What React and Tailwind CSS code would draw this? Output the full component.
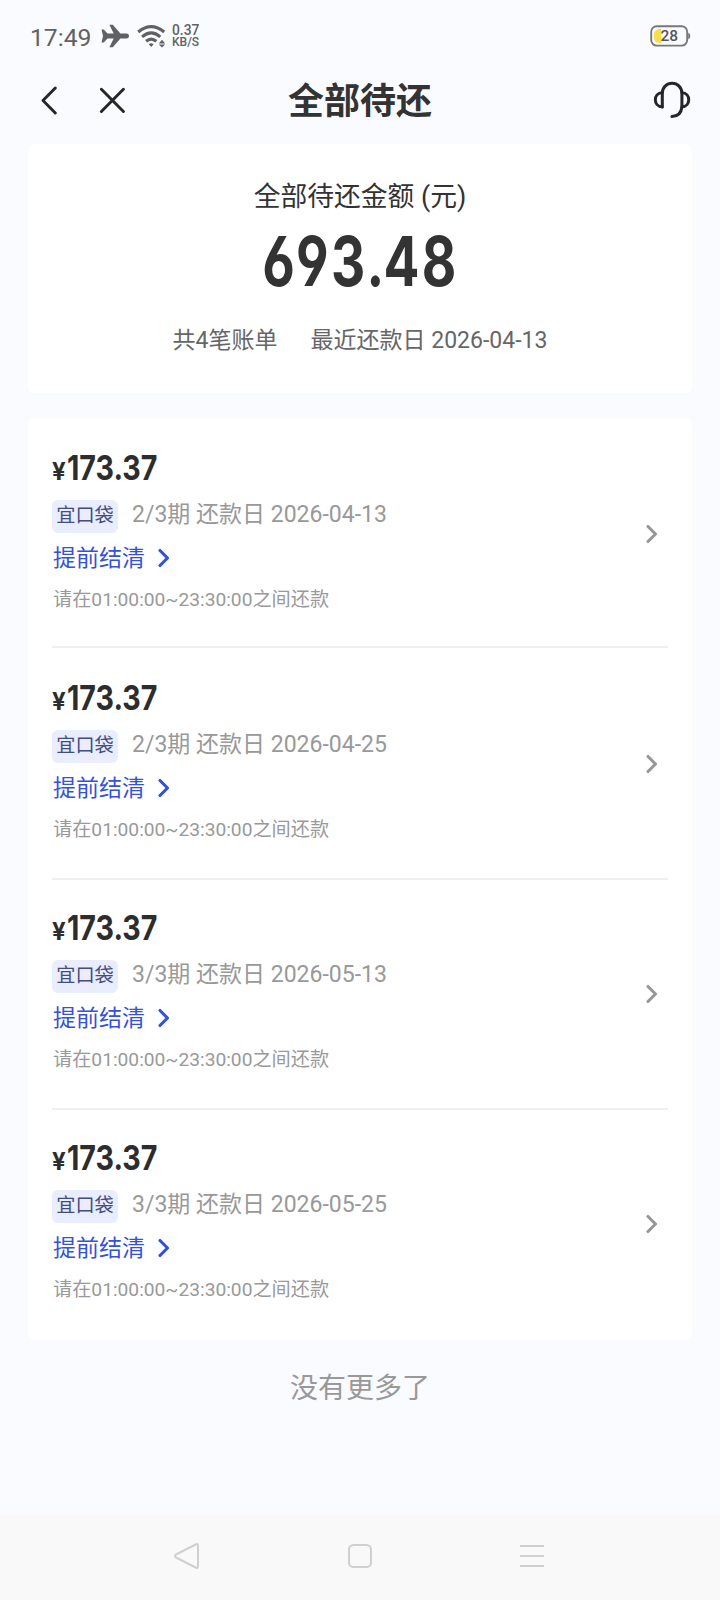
import React from 'react';

const bills = [
  { period: '2/3期', due: '2026-04-13', spacing: 'h-[230px] pt-[28px] border-b-2' },
  { period: '2/3期', due: '2026-04-25', spacing: 'h-[232px] pt-[28px] border-b-2' },
  { period: '3/3期', due: '2026-05-13', spacing: 'h-[230px] pt-[26px] border-b-2' },
  { period: '3/3期', due: '2026-05-25', spacing: 'h-[230px] pt-[26px]' },
];

function StatusBar() {
  return (
    <div className="flex h-[70px] items-center justify-between pl-[30px] pr-[29px] pt-[2px] text-[#606164]">
      <div className="flex items-center">
        <span className="w-[71px] pt-[3px] text-[24.7px] leading-8">17:49</span>
        <svg className="h-[24px] w-[28px]" viewBox="0 0 28 24" fill="currentColor">
          <path d="M0.5 5.5h2.2l3.8 4h6.2L8.4 0.8h3.4l7.6 8.7h6.1c3.3 0 3.3 5 0 5h-6.1l-7.6 8.7H8.4l4.3-8.7H6.5l-3.8 4H0.5L2 12z" />
        </svg>
        <svg className="ml-2 h-[24px] w-[30px]" viewBox="0 0 30 24" fill="none" stroke="currentColor" strokeWidth="3.1">
          <path d="M1.2 8Q14.2-2.8 27.2 8M5.1 12.9Q14.2 5 23.3 12.9M9.1 17.3Q14.2 13 19.3 17.3" />
          <path d="M11.8 20.2Q14.2 18.2 16.6 20.2L14.2 23z" fill="currentColor" stroke="none" />
          <path d="M25 15.8l3.2 3.6h-6.4zM25 23.6l3.2-3.2h-6.4z" fill="currentColor" stroke="none" />
        </svg>
        <div className="ml-[5px] flex flex-col font-medium">
          <span className="text-[13.8px] leading-[12px]">0.37</span>
          <span className="text-[12px] leading-[12px]">KB/S</span>
        </div>
      </div>
      <svg className="h-[22px] w-[41px]" viewBox="0 0 41 22">
        <path d="M9 4h2v14H9a5 5 0 0 1-5-5V9a5 5 0 0 1 5-5z" fill="#fadf4b" />
        <rect x="1.2" y="1.2" width="36" height="19.4" rx="5.5" fill="none" stroke="#77787b" strokeWidth="1.9" />
        <path d="M38.2 8q2 0 2 3t-2 3z" fill="#77787b" />
        <text x="19.2" y="16.3" textAnchor="middle" fontSize="15.5" fontWeight="500" fill="#55565a">28</text>
      </svg>
    </div>
  );
}

function Header() {
  return (
    <header className="flex h-[74px] items-start justify-between pl-[40px] pr-[28px] pt-[10px]">
      <div className="flex h-10 w-[80px] items-center gap-[41px]">
        <svg className="h-[30px] w-[18px] shrink-0" viewBox="0 0 18 30" fill="none" stroke="#262628" strokeWidth="2.9" strokeLinecap="round" strokeLinejoin="round">
          <path d="M15.3 3L3 15.5 15.3 28" />
        </svg>
        <svg className="h-[30px] w-[26px] shrink-0" viewBox="0 0 26 30" fill="none" stroke="#262628" strokeWidth="2.9" strokeLinecap="round">
          <path d="M2.4 4.2l22 22.3M24.4 4.2L2.4 26.5" />
        </svg>
      </div>
      <h1 className="pt-[2px] text-[36px] font-bold leading-[40px] text-[#333]">全部待还</h1>
      <div className="flex w-[92px] justify-end">
        <svg className="h-[40px] w-[40px]" viewBox="0 0 40 40" fill="none" stroke="#262628" strokeWidth="3" strokeLinecap="round" strokeLinejoin="round">
          <path d="M10.3 27V13a9.8 9.8 0 0 1 19.6 0v14q-1 9.4-10 9.4" />
          <path d="M10.3 12.8C1 12.8 1 26.8 10.3 26.8M29.9 12.8C39 12.8 39 26.8 29.9 26.8" />
        </svg>
      </div>
    </header>
  );
}

function Chevron({ className }) {
  return (
    <svg className={className} viewBox="0 0 12 20" fill="none" stroke="currentColor" strokeWidth="3.1" strokeLinecap="round" strokeLinejoin="round">
      <path d="M2 2.5L9.5 10 2 17.5" />
    </svg>
  );
}

function Bill({ period, due, spacing }) {
  return (
    <li className={`flex items-start justify-between border-[#efefef] ${spacing}`}>
      <div className="flex flex-col">
        <div className="flex h-[44px] items-baseline font-['Inter'] font-bold text-[#2d2d2d]">
          <span className="w-[15px] origin-bottom-left text-[24px] leading-[44px]">¥</span>
          <span className="inline-block origin-left scale-x-[0.83] text-[34.5px] leading-[44px]">173.37</span>
        </div>
        <div className="mt-[10px] flex h-[32px] items-center">
          <span className="flex h-[33px] w-[66px] items-center justify-center rounded-md bg-[#e9edfd] text-[19.2px] text-[#424c7d]">宜口袋</span>
          <span className="ml-[14px] pb-[2px] text-[23px] text-[#999]">{period} 还款日 {due}</span>
        </div>
        <button className="mt-[8px] flex h-[36px] items-center gap-[13px] pl-px text-[23px] text-[#3451d8]">
          <span className="pt-[2px]">提前结清</span>
          <Chevron className="h-[20px] w-[12px]" />
        </button>
        <p className="mt-[10px] pl-px text-[19.2px] leading-[28px] text-[#999]">请在01:00:00~23:30:00之间还款</p>
      </div>
      <Chevron className="mr-[10px] mt-[78px] h-[20px] w-[12px] text-[#979797]" />
    </li>
  );
}

export default function App() {
  return (
    <div className="flex h-[1600px] w-[720px] flex-col overflow-hidden bg-[#fafbff] font-['Roboto','Noto_Sans_CJK_SC',sans-serif]">
      <StatusBar />
      <Header />
      <main className="flex flex-1 flex-col px-[28px]">
        <section className="flex h-[249px] flex-col items-center rounded-md bg-white pt-[35px]">
          <h2 className="text-[26.8px] leading-[36px] text-[#333]">全部待还金额 (元)</h2>
          <div className="mt-[11px] scale-x-[0.77] font-['Inter'] text-[69px] font-bold leading-[70px] tracking-[3px] text-[#333] [font-feature-settings:'cv03','cv04']">
            693<span className="-mr-[4px]">.</span>48
          </div>
          <div className="mt-[29px] flex gap-[33px] text-[23px] leading-[32px] text-[#666]">
            <span>共4笔账单</span>
            <span>最近还款日 2026-04-13</span>
          </div>
        </section>
        <ul className="mt-[25px] h-[922px] rounded-md bg-white px-[24px]">
          {bills.map((b) => (
            <Bill key={b.due} {...b} />
          ))}
        </ul>
        <p className="mt-[29px] text-center text-[28px] leading-[40px] text-[#999]">没有更多了</p>
      </main>
      <nav className="flex h-[87px] items-center justify-between bg-[#f9f9f9] pb-[2px] pl-[173px] pr-[175px] text-[#d0d0d0]">
        <svg className="h-[28px] w-[28px]" viewBox="0 0 28 28" fill="none" stroke="currentColor" strokeWidth="2" strokeLinejoin="round">
          <path d="M25 3.8v20.4q0 2.6-2.4 1.3L3 15.5q-2.2-1.5 0-3L22.6 2.5Q25 1.2 25 3.8z" />
        </svg>
        <svg className="h-[26px] w-[26px]" viewBox="0 0 26 26" fill="none" stroke="currentColor" strokeWidth="2">
          <rect x="2" y="2" width="22" height="22" rx="4.5" />
        </svg>
        <svg className="h-[26px] w-[26px]" viewBox="0 0 26 26" fill="none" stroke="currentColor" strokeWidth="2">
          <path d="M1 3h24M1 13h24M1 23h24" />
        </svg>
      </nav>
    </div>
  );
}
